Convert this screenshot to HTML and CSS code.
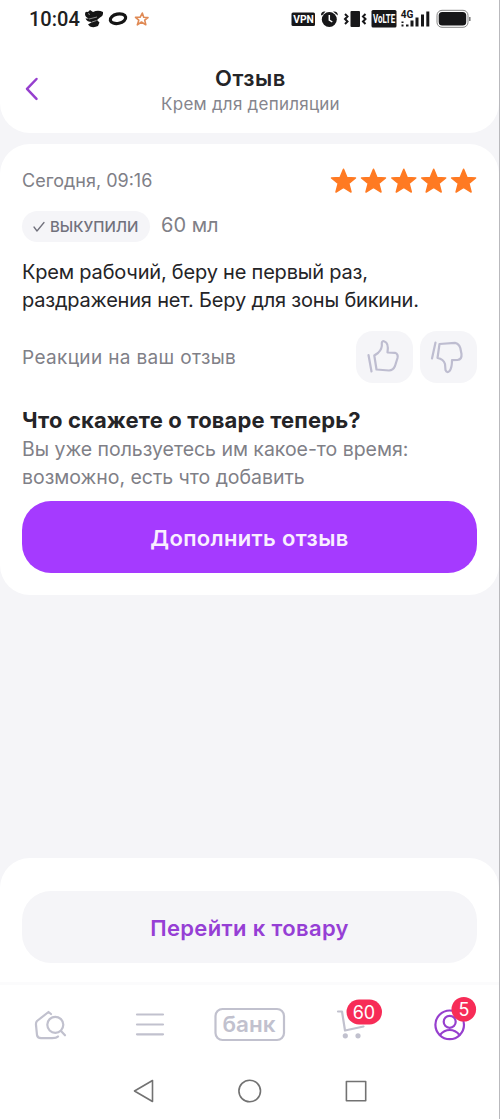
FILE: index.html
```html
<!DOCTYPE html>
<html lang="ru">
<head>
<meta charset="utf-8">
<title>Отзыв</title>
<link rel="stylesheet" href="styles.css">
</head>
<body>
<div class="screen">
  <header class="top">
    <div class="status">
      <span class="clock">10:04</span>
      <svg class="status-left" width="66" height="24" viewBox="84 7 66 24">
        <path d="M85 14Q85 11 88 12L90 10L93 12Q98 9.500 103 12Q103.500 16 100 17.500L97 20L99.500 22.500L98 26Q94 28 90 26.500L88 24.500L92 22Q87 22 85.500 18.500L89 18.500Q85 17 85 14Z" fill="#151515"/>
        <path d="M89 19L97 17M92 22L96.500 20.500M88 13.500L90 14.500" stroke="#fff" stroke-width=".5"/>
        <ellipse cx="118" cy="18.700" rx="7.800" ry="4.700" transform="rotate(-12 118 18.700)" fill="none" stroke="#151515" stroke-width="3.200"/>
        <path d="M142.300 13L143.700 17.300L148 17.600L144.700 20.100L145.800 24.800L141.500 22L137.300 24.900L138.800 20.200L135.500 17.300L140.100 17.300Z" fill="none" stroke="#e08a55" stroke-width="1.600" stroke-linejoin="round"/>
      </svg>
      <svg class="status-right" width="184" height="26" viewBox="288 6 184 26">
        <g fill="#171719">
          <rect x="291.500" y="12.500" width="23.500" height="13.500" rx="1.500"/>
          <circle cx="329.300" cy="19.500" r="7.500"/>
          <path d="M321 15Q321 11 325.500 11.500L322 15.500ZM333 11.500Q338 11 337.800 15.500Z"/>
          <rect x="350.500" y="11" width="9.500" height="16" rx="1"/>
          <rect x="371.500" y="10" width="25" height="17.500" rx="1.500"/>
          <rect x="401.500" y="21.500" width="2" height="1.500"/><rect x="401.500" y="24.500" width="2" height="2"/><rect x="406" y="24.500" width="2.500" height="2"/>
          <rect x="410.500" y="20.500" width="3" height="6"/><rect x="415.500" y="17.500" width="3" height="9"/><rect x="421" y="14.500" width="3" height="12"/><rect x="426.300" y="11.500" width="3" height="15"/>
          <rect x="438.700" y="12" width="27.500" height="13.500" rx="3.500"/>
        </g>
        <path d="M329.300 15V20L332.300 22" fill="none" stroke="#fff" stroke-width="1.500"/>
        <path d="M345 14L347.500 16.500L345 19L347.500 21.500L345 24M365.500 14L363 16.500L365.500 19L363 21.500L365.500 24" fill="none" stroke="#171719" stroke-width="2"/>
        <rect x="437" y="10.300" width="31" height="17" rx="5" fill="none" stroke="#777" stroke-width=".9"/>
        <path d="M469.800 17V21" stroke="#777" stroke-width="1.500"/>
        <text class="vpn" transform="translate(293.200 23.200) scale(.94 1)">VPN</text>
        <text class="volte" transform="translate(373 23.300) scale(.66 1)">VoLTE</text>
        <text class="net" transform="translate(400.700 17.500) scale(.96 1)">4G</text>
      </svg>
    </div>
    <div class="nav">
      <svg class="back" width="16" height="24" viewBox="0 0 16 24" fill="none" stroke="#963fce" stroke-width="2.500" stroke-linecap="round" stroke-linejoin="round"><path d="M13.500 2L4 11.900L13.500 21.800"/></svg>
      <div class="titles"><h1>Отзыв</h1><p class="subtitle">Крем для депиляции</p></div>
    </div>
  </header>

  <main class="review">
    <div class="meta">
      <time class="date">Сегодня, 09:16</time>
      <svg class="stars" width="147" height="28" viewBox="0 0 147 28" fill="#ff7a22" stroke="#ff7a22" stroke-width="1.500" stroke-linejoin="round">
        <defs><path id="star" d="M13 2.200L16.300 10.400L25 10.900L18.300 16.400L20.500 25L13 20.300L5.500 25L7.700 16.400L1 10.900L9.700 10.400Z"/></defs>
        <use href="#star" x=".5"/><use href="#star" x="30.500"/><use href="#star" x="60.800"/><use href="#star" x="90.700"/><use href="#star" x="120.600"/>
      </svg>
    </div>
    <div class="purchase">
      <span class="tag"><svg width="12" height="12" viewBox="0 0 12 12" fill="none" stroke="#71717c" stroke-width="1.300" stroke-linecap="round" stroke-linejoin="round"><path d="M1 6L4 10L11 1.500"/></svg><span>ВЫКУПИЛИ</span></span>
      <span class="volume">60 мл</span>
    </div>
    <p class="text">Крем рабочий, беру не первый раз,<br>раздражения нет. Беру для зоны бикини.</p>
    <div class="reactions">
      <span class="label">Реакции на ваш отзыв</span>
      <button class="react" aria-label="Нравится"><svg width="57" height="52" viewBox="356 331 57 52"><path d="M368.500 355L371.500 371.500M374.300 355.500L378 353Q382.500 349 381.800 343Q382 340.500 384.500 341.500Q389 343 387.500 352.500L395 352.800Q398.500 354 397.500 358L395 366Q393 370.500 389 370.500L376.500 369.500Z"/></svg></button>
      <button class="react" aria-label="Не нравится"><svg width="57" height="52" viewBox="420 331 57 52"><path d="M435.500 342.500L432 358.500M439.500 344L455 342.800Q459 343.500 460.300 348L461.500 354Q462 359.500 457.500 360L452 360.200Q452 368 449.500 371Q447 373.500 445.500 370L445 364Q443.500 359 437.500 358Z"/></svg></button>
    </div>
    <h2>Что скажете о товаре теперь?</h2>
    <p class="hint">Вы уже пользуетесь им какое-то время:<br>возможно, есть что добавить</p>
    <button class="primary">Дополнить отзыв</button>
  </main>

  <footer class="bottom">
    <div class="action"><button class="secondary">Перейти к товару</button></div>
    <nav class="tabs">
      <svg width="500" height="70" viewBox="0 985 500 70" fill="none" stroke="#c1c1ce" stroke-width="2.200" stroke-linecap="round" stroke-linejoin="round">
        <path d="M51 1014L48.500 1012L37 1021Q35.700 1022.500 36 1025L37 1035Q37.500 1038 41 1038.200H52Q56.500 1038 58 1036.500"/>
        <circle cx="55.300" cy="1024.800" r="8"/><path d="M61 1031L65 1035.300"/>
        <path d="M137 1014.500H163M137 1024.500H163M137 1034.300H163"/>
        <rect x="215.500" y="1009" width="68.500" height="31" rx="7"/>
        <text class="bank" x="222.500" y="1032" textLength="53" lengthAdjust="spacingAndGlyphs">банк</text>
        <path d="M338 1011.500H342L345 1030.500L363.500 1026.500"/>
        <g fill="#c1c1ce" stroke="none"><circle cx="345.300" cy="1035.800" r="2.600"/><circle cx="358" cy="1035.800" r="2.600"/></g>
        <g stroke="#963fce"><circle cx="449.700" cy="1024.800" r="14.300"/><circle cx="449.700" cy="1021.800" r="6"/><path d="M440 1035Q444 1030 449.700 1030Q455.500 1030 459.500 1035"/></g>
        <g fill="#f72c57" stroke="none"><rect x="346.500" y="999.500" width="35.500" height="25" rx="12.500"/><circle cx="463.800" cy="1009.200" r="12.300"/></g>
        <text class="badge" x="352.700" y="1018.500" textLength="22.500">60</text><text class="badge" x="458.400" y="1015.700">5</text>
      </svg>
    </nav>
    <div class="system">
      <svg width="500" height="64" viewBox="0 1055 500 64" fill="none" stroke="#727272" stroke-width="1.600" stroke-linejoin="round"><path d="M134.500 1091L152.500 1080.500V1101.500Z"/><circle cx="249.700" cy="1091" r="10.800"/><rect x="346.400" y="1081.500" width="19.300" height="19.300"/></svg>
    </div>
  </footer>
</div>
</body>
</html>
```

FILE: styles.css
```css
* { box-sizing: border-box; }
body { margin: 0; font-family: Inter, "Noto Sans", sans-serif; color: #242427; background: #f5f5f8; }
h1, h2, p { margin: 0; }
button { border: 0; padding: 0; font: inherit; }
svg { display: block; flex: none; }
.screen { width: 500px; height: 1119px; display: flex; flex-direction: column; background: #f5f5f8; box-shadow: inset -1px 0 #b9b9bd; overflow: hidden; }
.top, .review, .bottom { width: 499px; background: #fff; }
.top { height: 133px; border-radius: 0 0 30px 30px; }
.status { height: 38px; display: flex; align-items: center; padding: 0 27px 0 29px; }
.clock { width: 55px; font-family: Roboto, sans-serif; font-size: 20px; font-weight: 500; color: #202020; }
.status-right { margin-left: auto; }
.vpn, .volte, .net { font-family: Roboto, sans-serif; font-weight: 700; fill: #fff; }
.vpn { font-size: 11px; }
.volte { font-size: 12px; }
.net { font-size: 10.500px; fill: #171719; }
.nav { display: grid; grid-template-columns: 38px 1fr 36px; padding: 26px 23px 0; }
.back { margin-top: 13px; }
.titles { text-align: center; padding-top: 1px; }
h1 { font-size: 22px; line-height: 27px; font-weight: 600; letter-spacing: .5px; }
.subtitle { font-size: 17px; line-height: 25px; letter-spacing: .25px; color: #85858d; }
.review { margin-top: 11px; height: 451px; padding: 22px; border-radius: 30px; display: flex; flex-direction: column; }
.meta { height: 29px; display: flex; align-items: center; justify-content: space-between; }
.date, .label, .hint, .volume { color: #808087; }
.date { font-size: 18px; }
.purchase { height: 31px; margin-top: 16px; display: flex; align-items: center; gap: 11px; }
.tag { height: 31px; width: 128px; border-radius: 16px; background: #f5f5f8; display: flex; align-items: center; padding-left: 11px; gap: 5px; color: #71717c; font-size: 15px; font-weight: 500; }
.volume { font-size: 20px; line-height: 24px; padding-bottom: 3px; }
.text { margin-top: 16px; font-size: 20px; line-height: 28px; letter-spacing: -.2px; white-space: nowrap; }
.reactions { height: 52px; margin-top: 17px; display: flex; align-items: center; gap: 7px; }
.label { font-size: 19px; letter-spacing: .35px; margin-right: auto; }
.react { width: 57px; height: 52px; border-radius: 17px; background: #f5f5f8; }
.react path { fill: none; stroke: #bebdd0; stroke-width: 2.200; stroke-linejoin: round; stroke-linecap: round; }
h2 { margin-top: 23px; font-size: 22px; line-height: 29px; font-weight: 700; letter-spacing: .15px; white-space: nowrap; }
.hint { font-size: 19.500px; line-height: 28px; letter-spacing: -.03px; white-space: nowrap; }
.primary, .secondary { width: 455px; height: 72px; border-radius: 29px; font-size: 22px; font-weight: 600; letter-spacing: .35px; }
.primary { margin-top: 10px; padding-top: 1px; background: #a53aff; color: #f9efff; flex: none; }
.bottom { height: 261px; margin-top: auto; border-radius: 30px 30px 0 0; }
.action { height: 127px; padding: 33px 22px 0; border-bottom: 3px solid #fbfbfc; }
.secondary { padding-top: 1px; background: #f5f5f8; color: #963fd5; }
.tabs { height: 70px; }
.system { height: 64px; }
.bank { font-size: 22px; font-weight: 600; fill: #c1c1ce; stroke: none; }
.badge { font-size: 18px; fill: #fff; stroke: none; }
```
